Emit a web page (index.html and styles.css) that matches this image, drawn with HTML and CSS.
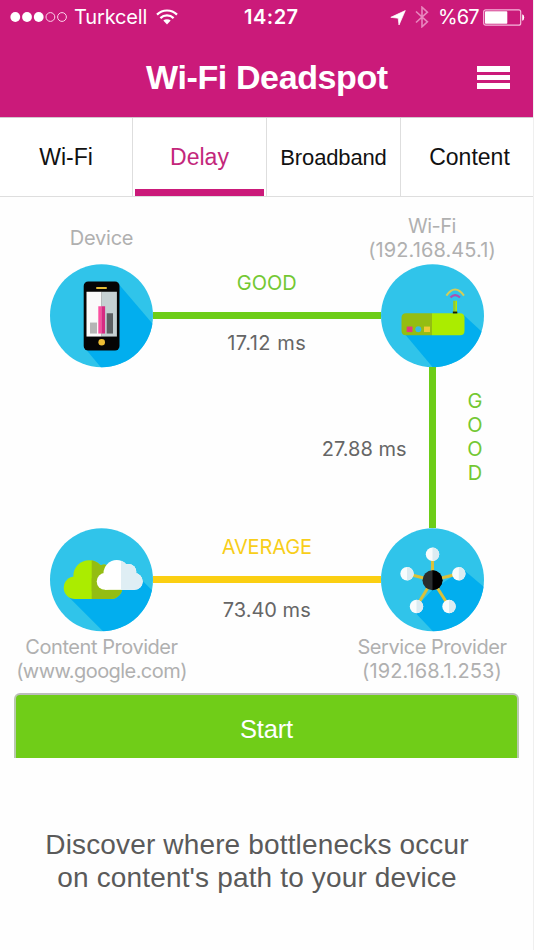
FILE: index.html
```html
<!DOCTYPE html>
<html lang="en">
<head>
<meta charset="utf-8">
<title>Wi-Fi Deadspot</title>
<link rel="stylesheet" href="styles.css">
</head>
<body>
<div class="app">
  <header class="header">
    <div class="status">
      <div class="status-left">
        <svg class="signal" width="58" height="12" viewBox="0 0 58 12"><g fill="#fff"><circle cx="5.3" cy="6" r="4.9"/><circle cx="17" cy="6" r="4.9"/><circle cx="28.7" cy="6" r="4.9"/></g><g fill="none" stroke="#fbd3ea" stroke-width="1"><circle cx="40.4" cy="6" r="4.4"/><circle cx="52" cy="6" r="4.4"/></g></svg>
        <span class="carrier">Turkcell</span>
        <svg class="wifi" width="22" height="16" viewBox="0 0 22 16"><g fill="none" stroke="#fff" stroke-width="2.2"><path d="M1 5.6a14.2 14.2 0 0 1 20 0"/><path d="M4.4 9.1a9.4 9.4 0 0 1 13.2 0"/></g><path d="M7.3 11.6a5.4 5.4 0 0 1 7.4 0L11 15.4z" fill="#fff"/></svg>
      </div>
      <span class="time">14:27</span>
      <div class="status-right">
        <svg class="location" width="16" height="16" viewBox="0 0 16 16"><path d="M15.300.6 9 15 8.200 8.200.800 7.300z" fill="#fff" stroke="#fff" stroke-width=".7"/></svg>
        <svg class="bluetooth" width="14" height="22" viewBox="0 0 14 22"><path d="M1 5.500 12.400 15.800 7 20.800V1.200l5.400 5L1 16.500" fill="none" stroke="#e887be" stroke-width="1.600"/></svg>
        <span class="percent">%67</span>
        <svg class="battery" width="42" height="17" viewBox="0 0 42 17"><rect x=".7" y=".8" width="37" height="15.400" rx="2" fill="none" stroke="#f5b9db" stroke-width="1.200"/><rect x="2" y="2.200" width="22.300" height="12.600" rx=".8" fill="#fff"/><path d="M39.200 5.200q2 .6 2 3.300t-2 3.300z" fill="#fff"/></svg>
      </div>
    </div>
    <div class="titlebar">
      <h1 class="title">Wi-Fi Deadspot</h1>
      <div class="menu"><i></i><i></i><i></i></div>
    </div>
  </header>

  <nav class="tabs">
    <div class="tab"><span class="t-wifi">Wi-Fi</span></div>
    <div class="tab active"><span class="t-delay">Delay</span></div>
    <div class="tab"><span class="t-broad">Broadband</span></div>
    <div class="tab"><span class="t-content">Content</span></div>
  </nav>

  <main class="diagram">
    <div class="label label-device"><span class="w-device">Device</span></div>
    <div class="label label-wifi"><span class="w-wifi">Wi-Fi</span><span class="w-ip">(192.168.45.1)</span></div>

    <svg class="node node-device" viewBox="0 0 103 103">
      <defs><clipPath id="disc"><circle cx="51.5" cy="51.5" r="51.5"/></clipPath></defs>
      <circle cx="51.5" cy="51.5" r="51.5" fill="#30c4ea"/>
      <path d="M68 19 120 80V120H65L35 84z" fill="#02aeee" clip-path="url(#disc)"/>
      <rect x="33.7" y="17.3" width="35.8" height="69" rx="4.5" fill="#050505"/>
      <rect x="46" y="22.8" width="11" height="2" rx="1" fill="#e5bd35"/>
      <path d="M36.5 27.5h15.2v44.8H36.5z" fill="#fafafa"/><path d="M51.7 27.5h15.2v44.8H51.7z" fill="#c5d0d2"/>
      <path d="M40 58.3h7v11h-7z" fill="#b5b5b5"/><path d="M48.3 42h3.4v27.3h-3.4z" fill="#fa4fa0"/><path d="M51.7 42h3.4v27.3h-3.4z" fill="#d62b83"/><path d="M56.7 49h6.3v20.3h-6.3z" fill="#5c6063"/>
      <circle cx="51.7" cy="78" r="3.3" fill="#edbd34"/>
    </svg>
    <div class="link link-top">
      <span class="grade good">GOOD</span><i class="line"></i><span class="ms ms1">17.12 ms</span>
    </div>
    <svg class="node node-wifi" viewBox="0 0 103 103">
      <circle cx="51.5" cy="51.5" r="51.5" fill="#30c4ea"/>
      <path d="M83 51 110 76V120H66L24 70z" fill="#02aeee" clip-path="url(#disc)"/>
      <path d="M25 49h26v22H25q-4.500 0-4.500-4.500v-13Q20.500 49 25 49z" fill="#94bd12"/>
      <path d="M51 49h28q4.500 0 4.500 4.500v13q0 4.500-4.500 4.500H51z" fill="#abec00"/>
      <path d="M25.700 62.300h5.800v5.500h-5.800z" fill="#e23b7e"/><circle cx="37.300" cy="65" r="3" fill="#38bde0"/><path d="M43 62.300h6v5.500h-6z" fill="#f0ca35"/>
      <path d="M72.200 36.500h2.300V49h-2.300z" fill="#9acb21"/><path d="M74.500 36.500h1.500V49h-1.500z" fill="#b5e900"/><path d="M71.800 47.300h4.500v1.900h-4.500z" fill="#172000"/>
      <path d="M65.400 31.300q8.600-12 17.600 0" fill="none" stroke="#d4ce58" stroke-width="2"/>
      <path d="M69.500 33.300q4.500-5 9.500 0" fill="none" stroke="#ad50b0" stroke-width="2.300"/>
    </svg>

    <div class="vlink"><span class="ms ms2">27.88 ms</span></div>
    <div class="vline"></div>
    <div class="vgrade good"><span>G</span><span>O</span><span>O</span><span>D</span></div>

    <svg class="node node-content" viewBox="0 0 103 103">
      <defs>
        <clipPath id="greenRight"><path d="M41.700 0H103V103H41.700z"/></clipPath>
        <clipPath id="whiteRight"><path d="M71 0h32v103H71z"/></clipPath>
        <g id="greenCloud"><circle cx="39" cy="47.500" r="15.600"/><circle cx="25" cy="59.500" r="11.300"/><circle cx="54" cy="46.300" r="10"/><circle cx="60.500" cy="58.800" r="12"/><path d="M25 50h35.500v20.800H25z"/></g>
        <g id="whiteCloud"><circle cx="66.700" cy="45" r="13.200"/><circle cx="55.100" cy="53.200" r="8.400"/><circle cx="78.300" cy="43.700" r="8"/><circle cx="84.300" cy="53.200" r="8.400"/><path d="M55 46h29.300v15.600H55z"/></g>
      </defs>
      <circle cx="51.500" cy="51.500" r="51.500" fill="#30c4ea"/>
      <path d="M90 50 110 70V120H70L19 69z" fill="#02aeee" clip-path="url(#disc)"/>
      <use href="#greenCloud" fill="#abec00"/><g clip-path="url(#greenRight)"><use href="#greenCloud" fill="#94bd12"/></g>
      <use href="#whiteCloud" fill="#fff"/><g clip-path="url(#whiteRight)"><use href="#whiteCloud" fill="#dfeef4"/></g>
    </svg>
    <div class="link link-bottom">
      <span class="grade average">AVERAGE</span><i class="line yellow"></i><span class="ms ms3">73.40 ms</span>
    </div>
    <svg class="node node-service" viewBox="0 0 103 103">
      <circle cx="51.500" cy="51.500" r="51.500" fill="#30c4ea"/>
      <path d="M82 41 120 73V120H68L32 82 51 62z" fill="#02aeee" clip-path="url(#disc)"/>
      <path d="M51.500 52V26M51.500 52 26 45.500M51.500 52 77.500 45.500M51.500 52 35.500 78M51.500 52 68 78" stroke="#d9c13b" stroke-width="3"/>
      <g fill="#f8fcfd"><circle cx="51.500" cy="26" r="6.700"/><circle cx="26" cy="45.500" r="6.700"/><circle cx="77.800" cy="45.500" r="6.700"/><circle cx="35.500" cy="78.300" r="6.700"/><circle cx="68" cy="78.300" r="6.700"/></g>
      <g fill="#dcecf2"><path d="M51.500 19.300a6.700 6.700 0 0 1 0 13.400z"/><path d="M26 38.800a6.700 6.700 0 0 1 0 13.400z"/><path d="M77.800 38.800a6.700 6.700 0 0 1 0 13.400z"/><path d="M35.500 71.600a6.700 6.700 0 0 1 0 13.400z"/><path d="M68 71.600a6.700 6.700 0 0 1 0 13.400z"/></g>
      <circle cx="51.500" cy="52" r="10" fill="#292d2e"/><path d="M51.500 42a10 10 0 0 1 0 20z" fill="#000"/>
    </svg>

    <div class="label label-content"><span class="w-cp">Content Provider</span><span class="w-url">(www.google.com)</span></div>
    <div class="label label-service"><span class="w-sp">Service Provider</span><span class="w-ip">(192.168.1.253)</span></div>
  </main>

  <div class="start"><span>Start</span></div>
  <p class="hint"><span>Discover where bottlenecks occur</span><span>on content's path to your device</span></p>
</div>
</body>
</html>
```
FILE: styles.css
```css
* { box-sizing: border-box; }
body { margin: 0; background: #fff; }
.app { width: 534px; height: 950px; overflow: hidden; background: #fefefe; border-right: 1px solid #efefef; font-family: "Liberation Sans", Arial, sans-serif; }
svg { display: block; flex: none; }
span { white-space: nowrap; }

.header { width: 534px; height: 117px; background: #cb1a7a; color: #fff; }
.status { display: flex; height: 36px; font: 400 20px/35px Inter, sans-serif; color: #fff; }
.status-left { display: flex; width: 244px; padding-left: 10px; }
.signal { margin-top: 11px; }
.carrier { width: 73px; margin-left: 6px; letter-spacing: -.15px; }
.wifi { margin: 9px 0 0 9px; }
.time { width: 146px; font-weight: 600; letter-spacing: .5px; }
.status-right { display: flex; }
.location { margin-top: 10px; }
.bluetooth { margin: 6px 0 0 9px; }
.percent { width: 39px; margin-left: 9px; letter-spacing: -.9px; }
.battery { margin: 9px 0 0 6px; }
.titlebar { display: flex; height: 81px; padding-left: 146px; }
.title { width: 331px; margin: 0; font-size: 34px; letter-spacing: -.38px; line-height: 82px; font-weight: 700; white-space: nowrap; }
.menu { display: flex; flex-direction: column; gap: 3px; margin-top: 30px; }
.menu i { width: 33px; height: 5.6px; background: #fff; }

.tabs { display: grid; grid-template-columns: 132px 134px 134px 134px; width: 534px; height: 80px; border-top: 1px solid #d2c8ce; border-bottom: 1px solid #dedede; background: #fff; font-size: 23px; line-height: 79px; color: #111; text-align: center; }
.tab { border-left: 1px solid #dedede; height: 78px; }
.tab:first-child { border-left: 0; }
.active { color: #c3277b; padding: 0 2px; }
.active span { display: block; height: 78px; border-bottom: 7px solid #cb1a7a; }
.t-broad { font-size: 22px; letter-spacing: -.15px; }
.t-content { padding-left: 4px; }

.diagram { display: grid; width: 534px; height: 496px; grid-template-columns: 50px 103px 227.5px 103px 50.5px; grid-template-rows: 67.300px 103px 161px 104px 60.700px; font-family: Inter, sans-serif; font-size: 20px; line-height: 24px; }
.label { display: flex; flex-direction: column; align-items: center; justify-self: center; color: #b0b0b0; }
.label-device { grid-area: 1 / 2; padding-top: 29px; }
.label-wifi { grid-area: 1 / 4; padding-top: 17px; }
.label-content { grid-area: 5 / 2; padding-top: 3px; }
.label-service { grid-area: 5 / 4; padding-top: 3px; }
.w-device { letter-spacing: -.2px; }
.w-wifi { letter-spacing: -.5px; }
.w-ip { letter-spacing: .1px; }
.w-cp, .w-sp { letter-spacing: -.45px; }
.w-url { letter-spacing: -.56px; }
.node { width: 103px; height: 103.5px; }
.node-device { grid-area: 2 / 2; }
.node-wifi { grid-area: 2 / 4; }
.node-content { grid-area: 4 / 2; }
.node-service { grid-area: 4 / 4; }
.link { display: flex; flex-direction: column; align-items: center; }
.link-top { grid-area: 2 / 3; padding-top: 7.2px; }
.link-bottom { grid-area: 4 / 3; padding-top: 7.2px; }
.line { width: 227.500px; height: 7px; margin: 17px 0 12px; background: #6dcd17; }
.yellow { background: #fbcf12; }
.link-bottom .line { margin-bottom: 15px; }
.good { color: #73c832; }
.average { color: #f8ce1a; letter-spacing: -.15px; }
.ms { color: #666; }
.ms1 { letter-spacing: .5px; }
.vlink { grid-area: 3 / 3; display: flex; justify-content: flex-end; padding-top: 70px; }
.ms2 { margin-right: -26px; }
.vline { grid-area: 3 / 4; justify-self: center; width: 7px; background: #6dcd17; }
.vgrade { grid-area: 3 / 5; display: flex; flex-direction: column; align-items: center; width: 20px; margin: 21.700px 0 0 -18.500px; }

.start { width: 505px; height: 65px; margin-left: 14px; border: 2px solid #b8c9ae; border-top-color: #bcbcbc; border-bottom: 0; border-radius: 6px 6px 0 0; background: #70cd18; color: #fff; font-size: 25.500px; letter-spacing: -.2px; line-height: 69px; text-align: center; }
.hint { display: flex; flex-direction: column; align-items: center; width: 514px; margin: 70px 0 0; color: #5a5a5a; font-size: 28px; letter-spacing: .15px; line-height: 33px; }
```
